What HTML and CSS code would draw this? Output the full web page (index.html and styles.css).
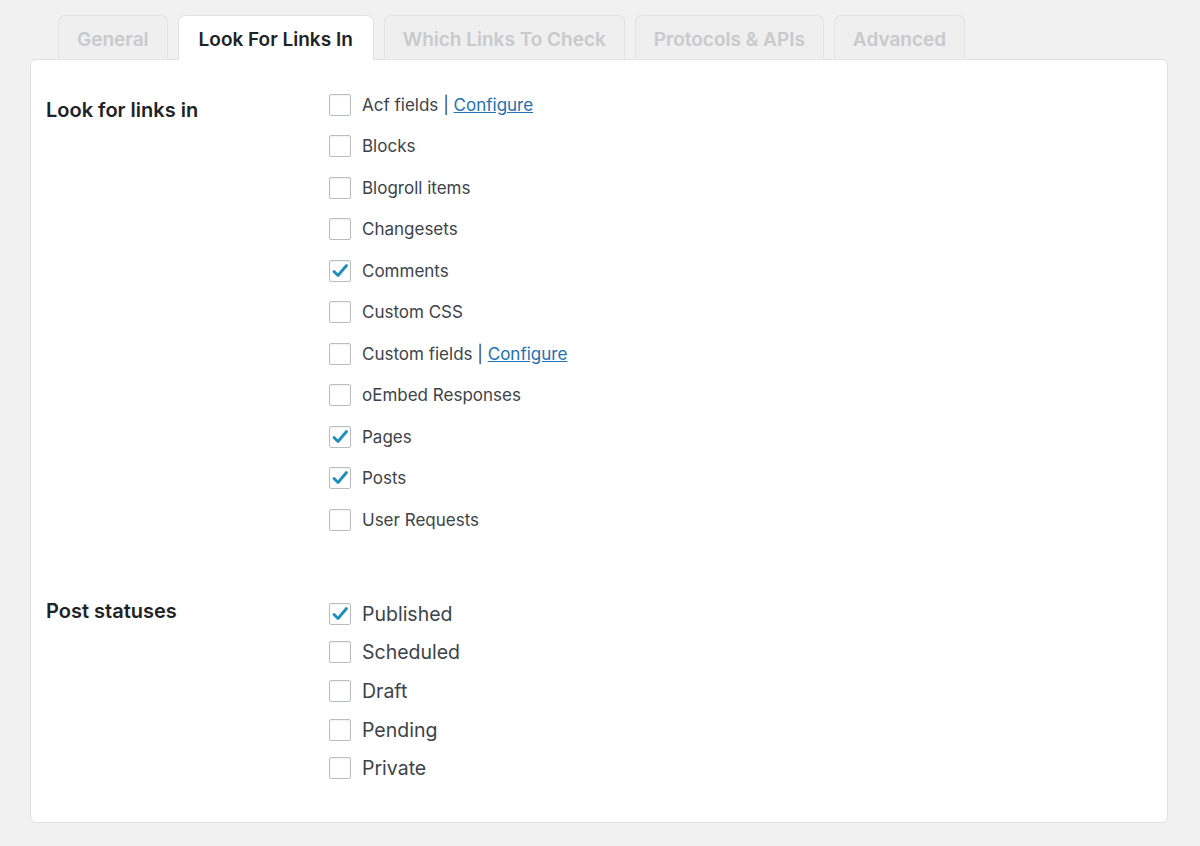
FILE: index.html
```html
<!DOCTYPE html>
<html>
<head>
<meta charset="utf-8">
<link rel="stylesheet" href="styles.css">
</head>
<body>
<div class="wrap">
  <nav class="tabs">
    <a class="tab">General</a>
    <a class="tab active">Look For Links In</a>
    <a class="tab">Which Links To Check</a>
    <a class="tab">Protocols &amp; APIs</a>
    <a class="tab">Advanced</a>
  </nav>
  <div class="panel">
    <div class="section s1">
      <div class="label">Look for links in</div>
      <ul class="opts">
        <li><span class="cb"></span><span>Acf fields <span class="sep">|</span> <a class="link">Configure</a></span></li>
        <li><span class="cb"></span><span>Blocks</span></li>
        <li><span class="cb"></span><span>Blogroll items</span></li>
        <li><span class="cb"></span><span>Changesets</span></li>
        <li><span class="cb on"><svg viewBox="0 0 20 20"><path d="M4 10.5l4 4 8.5-10"/></svg></span><span>Comments</span></li>
        <li><span class="cb"></span><span>Custom CSS</span></li>
        <li><span class="cb"></span><span>Custom fields <span class="sep">|</span> <a class="link">Configure</a></span></li>
        <li><span class="cb"></span><span>oEmbed Responses</span></li>
        <li><span class="cb on"><svg viewBox="0 0 20 20"><path d="M4 10.5l4 4 8.5-10"/></svg></span><span>Pages</span></li>
        <li><span class="cb on"><svg viewBox="0 0 20 20"><path d="M4 10.5l4 4 8.5-10"/></svg></span><span>Posts</span></li>
        <li><span class="cb"></span><span>User Requests</span></li>
      </ul>
    </div>
    <div class="section s2">
      <div class="label">Post statuses</div>
      <ul class="opts">
        <li><span class="cb on"><svg viewBox="0 0 20 20"><path d="M4 10.5l4 4 8.5-10"/></svg></span><span>Published</span></li>
        <li><span class="cb"></span><span>Scheduled</span></li>
        <li><span class="cb"></span><span>Draft</span></li>
        <li><span class="cb"></span><span>Pending</span></li>
        <li><span class="cb"></span><span>Private</span></li>
      </ul>
    </div>
  </div>
</div>
</body>
</html>
```
FILE: styles.css
```css
html, body {
  margin: 0;
  padding: 0;
  background: #f1f1f1;
}
body {
  font-family: Inter, "Noto Sans", "Liberation Sans", sans-serif;
  color: #3c434a;
}
.wrap {
  padding: 15px 32px 0 30px;
}
.tabs {
  display: flex;
  gap: 10px;
  padding-left: 28px;
  position: relative;
  z-index: 1;
}
.tab {
  display: block;
  height: 42px;
  line-height: 47px;
  padding: 0 18px;
  font-size: 19px;
  font-weight: 600;
  color: #c8cacd;
  background: #efefef;
  border: 1px solid #e2e2e2;
  border-bottom: none;
  border-radius: 7px 7px 0 0;
}
.tab.active {
  background: #fff;
  color: #1d2327;
  height: 44px;
  margin-bottom: -1px;
  padding: 0 20px;
}
.panel {
  background: #fff;
  border: 1px solid #e0e0e0;
  border-radius: 6px;
  height: 764px;
  box-sizing: border-box;
  padding: 35px 0 0 15px;
}
.section {
  display: grid;
  grid-template-columns: 283px 1fr;
}
.label {
  font-size: 20px;
  font-weight: 600;
  color: #1d2327;
}
.s1 .label { padding-top: 3px; }
.s2 { margin-top: 59px; }
.s2 .label { margin-top: -1px; }
.opts {
  list-style: none;
  margin: 0;
  padding: 0;
}
.opts li {
  display: flex;
  align-items: center;
  gap: 11px;
  height: 41.5px;
  font-size: 17px;
}
.s1 .opts li:first-child { margin-top: -11px; }
.s2 .opts li {
  height: 38.6px;
  font-size: 19.5px;
}
.s2 .opts li:first-child { margin-top: -5px; }
.sep { color: #3c434a; }
.cb {
  width: 22px;
  height: 22px;
  box-sizing: border-box;
  border: 1px solid #b9bcc0;
  border-radius: 2px;
  background: #fff;
  box-shadow: inset 0 1px 2px rgba(0,0,0,0.06);
  display: flex;
  align-items: center;
  justify-content: center;
  flex: none;
}
.cb svg {
  width: 20px;
  height: 20px;
}
.cb svg path {
  fill: none;
  stroke: #1e8cbe;
  stroke-width: 2.8;
  stroke-linecap: round;
  stroke-linejoin: round;
}
.link {
  color: #2271b1;
  text-decoration: underline;
}
```
